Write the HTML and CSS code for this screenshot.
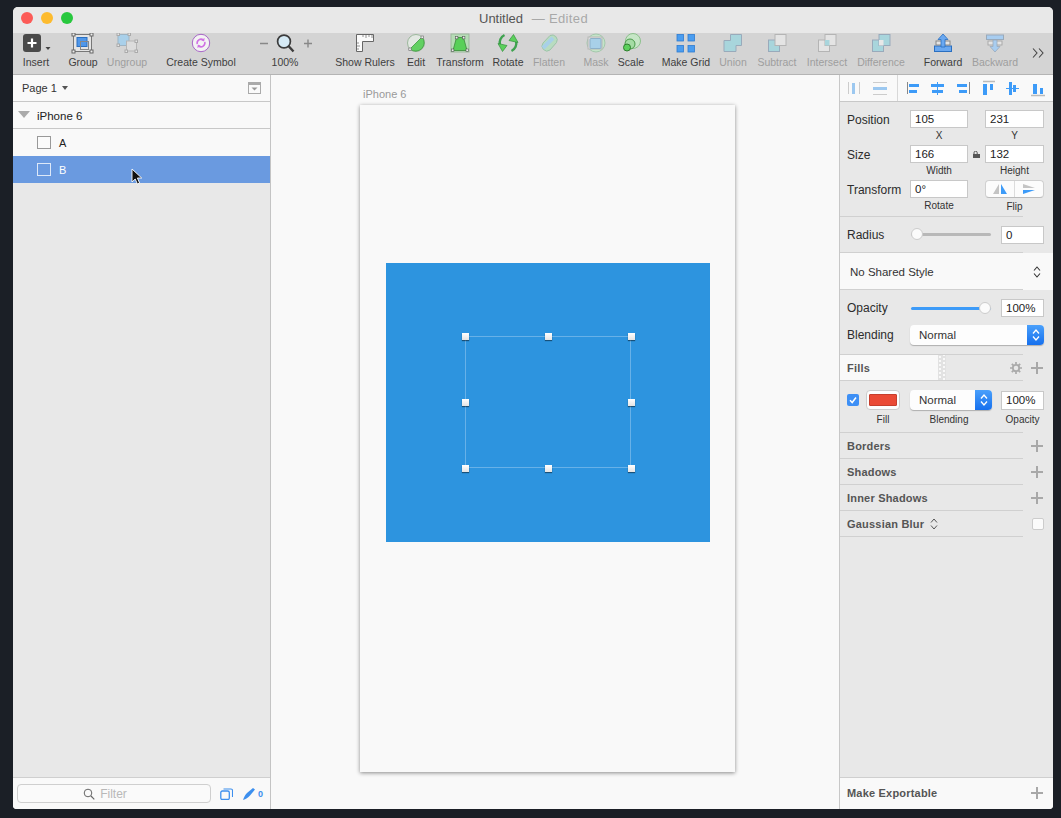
FILE: index.html
```html
<!DOCTYPE html>
<html lang="en">
<head>
  <meta charset="UTF-8" />
  <title>Untitled - Edited</title>
  <link rel="stylesheet" href="styles.css">
</head>
<body>

<div class="window">

  <!-- Title bar -->
  <div class="titlebar">
    <div class="lights">
      <span class="light red"></span>
      <span class="light yellow"></span>
      <span class="light green"></span>
    </div>
    <div class="title">Untitled <span class="edited">— Edited</span></div>
  </div>

  <!-- Toolbar -->
  <div class="toolbar">
    <div class="tool t-insert">
      <svg class="ico" viewBox="0 0 30 22"><rect x="2" y="1" width="18" height="18" rx="3" fill="#4a4a4a"/><path d="M11 5.500v9M6.500 10h9" stroke="#fff" stroke-width="2.200"/><path d="M24.500 14h5l-2.500 3z" fill="#444"/></svg>
      <span>Insert</span>
    </div>
    <div class="tool t-group">
      <svg class="ico" viewBox="0 0 30 22"><rect x="5.500" y="1.500" width="18" height="17" fill="#e4e4e4" stroke="#777"/><rect x="9" y="4.500" width="10" height="9" fill="#4f97ea" stroke="#2a6fc0"/><rect x="12.500" y="8.500" width="8" height="8" fill="none" stroke="#888"/><g fill="#eee" stroke="#666"><rect x="4" y="0" width="3" height="3"/><rect x="22" y="0" width="3" height="3"/><rect x="4" y="17" width="3" height="3"/><rect x="22" y="17" width="3" height="3"/></g></svg>
      <span>Group</span>
    </div>
    <div class="tool t-ungroup off">
      <svg class="ico" viewBox="0 0 30 22"><rect x="6" y="1.500" width="11" height="11" rx="1" fill="#a9d0ea" stroke="#9db4c4"/><rect x="14.500" y="8" width="10" height="10" fill="#dcdcdc" stroke="#b5b5b5"/><g fill="#e6e6e6" stroke="#aaa"><rect x="5" y="0" width="2.500" height="2.500"/><rect x="16" y="0" width="2.500" height="2.500"/><rect x="5" y="11" width="2.500" height="2.500"/><rect x="13" y="17" width="2.500" height="2.500"/><rect x="23" y="17" width="2.500" height="2.500"/><rect x="23" y="7" width="2.500" height="2.500"/></g></svg>
      <span>Ungroup</span>
    </div>
    <div class="tool t-symbol">
      <svg class="ico" viewBox="0 0 30 22"><circle cx="15" cy="10" r="8.700" fill="#f3f3f3" stroke="#a866c8" stroke-width="1"/><path d="M11.200 11a4 4 0 0 1 6-4.200M18.800 9a4 4 0 0 1-6 4.200" fill="none" stroke="#d070e4" stroke-width="1.600"/><path d="M18.600 5l-.4 3.400-3-1.200zM11.400 15l.4-3.400 3 1.200z" fill="#d070e4"/></svg>
      <span>Create Symbol</span>
    </div>
    <div class="tool t-zoom">
      <svg class="ico wide" viewBox="0 0 60 22"><path d="M5 10.500h8" stroke="#888" stroke-width="1.400"/><circle cx="29" cy="8.500" r="6.400" fill="#d6eaf5" stroke="#3c3c3c" stroke-width="1.700"/><path d="M33.500 13l5 5.500" stroke="#3c3c3c" stroke-width="2.400"/><path d="M49 10.500h8M53 6.500v8" stroke="#888" stroke-width="1.400"/></svg>
      <span>100%</span>
    </div>
    <div class="tool t-rulers">
      <svg class="ico" viewBox="0 0 30 22"><path d="M6.500 1.500h17v7h-11v10h-6z" fill="#fafafa" stroke="#666"/><path d="M13 2v2M16 2v3M19 2v2M22 2v3M7 10h2M7 13h3M7 16h2" stroke="#777" stroke-width=".8"/></svg>
      <span>Show Rulers</span>
    </div>
    <div class="tool t-edit">
      <svg class="ico" viewBox="0 0 30 22"><circle cx="15" cy="10" r="8.500" fill="#e2e8e2" stroke="#9cb89c"/><path d="M21 4a8.500 8.500 0 0 1-12 12z" fill="#62d062" stroke="#3f9a3f" stroke-width=".8"/><rect x="20" y="3" width="2.400" height="2.400" fill="#eee" stroke="#666" stroke-width=".6"/><rect x="7.800" y="15" width="2.400" height="2.400" fill="#eee" stroke="#666" stroke-width=".6"/></svg>
      <span>Edit</span>
    </div>
    <div class="tool t-transform">
      <svg class="ico" viewBox="0 0 30 22"><rect x="6" y="1" width="18" height="18" fill="#b6dcb6" stroke="#9cb89c"/><path d="M11.500 4.500h7l3.500 13h-14z" fill="#58d058" stroke="#3a8a3a" stroke-width=".8"/><g fill="#eee" stroke="#555" stroke-width=".6"><rect x="10.500" y="3.500" width="2.400" height="2.400"/><rect x="17.500" y="3.500" width="2.400" height="2.400"/><rect x="6.500" y="16" width="2.400" height="2.400"/><rect x="21" y="16" width="2.400" height="2.400"/></g></svg>
      <span>Transform</span>
    </div>
    <div class="tool t-rotate">
      <svg class="ico" viewBox="0 0 30 22"><g><path d="M11.500 2A8.500 8.500 0 0 0 7 12" fill="none" stroke="#3fa24f" stroke-width="2.400"/><path d="M5 10.500l9 2-4.500 6z" fill="#5cd05c" stroke="#35903f" stroke-width=".7"/></g><g transform="rotate(180 15 10)"><path d="M11.500 2A8.500 8.500 0 0 0 7 12" fill="none" stroke="#3fa24f" stroke-width="2.400"/><path d="M5 10.500l9 2-4.500 6z" fill="#5cd05c" stroke="#35903f" stroke-width=".7"/></g></svg>
      <span>Rotate</span>
    </div>
    <div class="tool t-flatten off">
      <svg class="ico" viewBox="0 0 30 22"><path d="M9 10l7-7.500a5 5 0 0 1 6.500 7L16 17a5 5 0 0 1-7-7z" fill="#b8dcc0" stroke="#9cc4a8"/><path d="M9 15l10-10" stroke="#a8d0e8" stroke-width="4"/></svg>
      <span>Flatten</span>
    </div>
    <div class="tool t-mask off">
      <svg class="ico" viewBox="0 0 30 22"><circle cx="15" cy="10" r="9" fill="#c4e4c8" stroke="#a4c8ac"/><rect x="7" y="4" width="14" height="12" fill="#dcdcdc" stroke="#b8b8b8"/><rect x="9" y="5.500" width="11" height="10" rx="1" fill="#a8d0e8" stroke="#8cb0c8"/></svg>
      <span>Mask</span>
    </div>
    <div class="tool t-scale">
      <svg class="ico" viewBox="0 0 30 22"><circle cx="17" cy="8" r="7.500" fill="#c6e6c6" stroke="#8cc08c"/><circle cx="14" cy="11" r="5" fill="#a4dca4" stroke="#4a9a4a"/><circle cx="11" cy="14.500" r="3.500" fill="#5cd05c" stroke="#2f7f2f"/></svg>
      <span>Scale</span>
    </div>
    <div class="tool t-grid">
      <svg class="ico" viewBox="0 0 30 22"><g fill="#4a9df0" stroke="#2f7cd0" stroke-width=".8"><rect x="6" y="1.500" width="6.500" height="6.500"/><rect x="17" y="1.500" width="6.500" height="6.500"/><rect x="6" y="12.500" width="6.500" height="6.500"/><rect x="17" y="12.500" width="6.500" height="6.500"/></g></svg>
      <span>Make Grid</span>
    </div>
    <div class="tool t-union off">
      <svg class="ico" viewBox="0 0 30 22"><path d="M12.500 1.500h11v11h-5.500v6h-12v-11h6.500z" fill="#a8d5dc" stroke="#9ab"/></svg>
      <span>Union</span>
    </div>
    <div class="tool t-subtract off">
      <svg class="ico" viewBox="0 0 30 22"><rect x="6.500" y="7" width="11" height="11.500" fill="#a8d5dc" stroke="#9ab"/><rect x="13" y="1.500" width="11" height="11" fill="#e4e4e4" stroke="#b4b4b4"/></svg>
      <span>Subtract</span>
    </div>
    <div class="tool t-intersect off">
      <svg class="ico" viewBox="0 0 30 22"><rect x="6.500" y="7" width="11" height="11.500" fill="#e4e4e4" stroke="#b4b4b4"/><rect x="13" y="1.500" width="11" height="11" fill="#e4e4e4" stroke="#b4b4b4"/><rect x="13" y="7" width="4.500" height="5.500" fill="#a8d5dc"/></svg>
      <span>Intersect</span>
    </div>
    <div class="tool t-difference off">
      <svg class="ico" viewBox="0 0 30 22"><rect x="6.500" y="7" width="11" height="11.500" fill="#a8d5dc" stroke="#9ab"/><rect x="13" y="1.500" width="11" height="11" fill="#a8d5dc" stroke="#9ab"/><rect x="13" y="7" width="4.500" height="5.500" fill="#e8e8e8"/></svg>
      <span>Difference</span>
    </div>
    <div class="tool t-forward">
      <svg class="ico" viewBox="0 0 30 22"><rect x="6.500" y="13" width="17" height="5.500" fill="#6aa8f0" stroke="#2a6fc0"/><rect x="8" y="8" width="14" height="4" fill="#e4e4e4" stroke="#888"/><path d="M15 1l5 5.500h-3V14h-4V6.500h-3z" fill="#6aa8f0" stroke="#2a6fc0" stroke-width=".8"/></svg>
      <span>Forward</span>
    </div>
    <div class="tool t-backward off">
      <svg class="ico" viewBox="0 0 30 22"><rect x="6.500" y="2" width="17" height="4.500" fill="#a8cdf0" stroke="#9ab"/><rect x="8" y="8" width="14" height="4" fill="#e4e4e4" stroke="#aaa"/><path d="M15 19l-5-5.500h3V7h4v6.500h3z" fill="#a8cdf0" stroke="#9ab" stroke-width=".8"/></svg>
      <span>Backward</span>
    </div>
    <div class="tool t-more">
      <svg class="more-ico" viewBox="0 0 12 10"><path d="M1 .5l4 4.500-4 4.500M7 .5l4 4.500-4 4.500" fill="none" stroke="#444" stroke-width="1.100"/></svg>
    </div>
  </div>

  <div class="main">

    <!-- Layer list -->
    <div class="layers">
      <div class="page-row">
        <span class="page-name">Page 1</span>
        <span class="caret"></span>
        <svg class="page-toggle" viewBox="0 0 13 12"><rect x=".5" y=".5" width="12" height="11" fill="#fafafa" stroke="#aaa"/><rect x="1" y="1" width="11" height="2" fill="#aaa"/><path d="M3.500 5.500h6l-3 3z" fill="#999"/></svg>
      </div>
      <div class="layer artboard-row">
        <span class="disclosure"></span>
        <span>iPhone 6</span>
      </div>
      <div class="layer shape-row">
        <span class="shape-box"></span>
        <span>A</span>
      </div>
      <div class="layer shape-row selected">
        <span class="shape-box"></span>
        <span>B</span>
      </div>
      <div class="layers-space"></div>
      <div class="layers-foot">
        <div class="filter">
          <svg class="filter-ico" viewBox="0 0 12 12"><circle cx="5" cy="5" r="3.800" fill="none" stroke="#666" stroke-width="1"/><path d="M8 8l3.300 3.300" stroke="#666" stroke-width="1.200"/></svg>
          <span>Filter</span>
        </div>
        <svg class="foot-ico" viewBox="0 0 13 12"><rect x=".8" y="3" width="8.500" height="8.500" rx="1.500" fill="none" stroke="#3d8fee" stroke-width="1.300"/><path d="M3.500 1h7.500a1.500 1.500 0 0 1 1.500 1.500V9" fill="none" stroke="#3d8fee" stroke-width="1.100"/></svg>
        <svg class="foot-ico pen" viewBox="0 0 13 12"><path d="M0 12c1-3 2-5 4-7l6-5 2 1.500-5 6c-2 2-4 3.500-7 4.500z" fill="#3d8fee"/></svg>
        <span class="pen-count">0</span>
      </div>
    </div>

    <!-- Canvas -->
    <div class="canvas">
      <div class="artboard-name">iPhone 6</div>
      <div class="artboard">
        <div class="rect-a">
          <div class="selection">
            <span class="handle h-tl"></span>
            <span class="handle h-tc"></span>
            <span class="handle h-tr"></span>
            <span class="handle h-ml"></span>
            <span class="handle h-mr"></span>
            <span class="handle h-bl"></span>
            <span class="handle h-bc"></span>
            <span class="handle h-br"></span>
          </div>
        </div>
      </div>
    </div>

    <!-- Inspector -->
    <div class="inspector">
      <div class="align-row">
        <svg class="align-ico" viewBox="0 0 200 14">
          <g fill="none" stroke="#ccc"><path d="M1.500 1v12M12.500 1v12M26 1.500h14M26 13.500h14"/></g>
          <rect x="5" y="2" width="3" height="11" fill="#9cc8f0"/><rect x="26" y="6" width="14" height="3" fill="#9cc8f0"/>
          <path d="M50.500 -6v26" stroke="#d8d8d8"/>
          <g fill="#3d9bf8">
            <rect x="60" y="1" width="1" height="12" fill="#888"/><rect x="62" y="3" width="10" height="3"/><rect x="62" y="9" width="8" height="3"/>
            <rect x="84" y="3" width="13" height="3"/><rect x="85" y="9" width="11" height="3"/><rect x="90" y="1" width="1" height="13"/>
            <rect x="122" y="1" width="1" height="12" fill="#888"/><rect x="110" y="3" width="10" height="3"/><rect x="112" y="9" width="8" height="3"/>
            <rect x="136" y="3" width="4" height="11"/><rect x="143" y="3" width="3" height="6"/>
            <rect x="162" y="1" width="3" height="13"/><rect x="166" y="4" width="3" height="7"/><rect x="159" y="7" width="13" height="1"/>
            <rect x="186" y="3" width="4" height="10"/><rect x="193" y="7" width="3" height="6"/>
          </g>
          <path d="M136 .5h12M184 14.500h14" stroke="#bbb" stroke-width="1.500"/>
        </svg>
      </div>

      <div class="geometry sep">
        <div class="geo-row">
          <span class="lbl">Position</span>
          <div class="field"><div class="box">105</div><span class="cap">X</span></div>
          <span></span>
          <div class="field"><div class="box">231</div><span class="cap">Y</span></div>
        </div>
        <div class="geo-row">
          <span class="lbl">Size</span>
          <div class="field"><div class="box">166</div><span class="cap">Width</span></div>
          <svg class="lock" viewBox="0 0 7 7"><path d="M1 3V1.800a1.600 1.600 0 0 1 3.200 0V3" fill="none" stroke="#555"/><rect x="0" y="3" width="7" height="4" fill="#555"/></svg>
          <div class="field"><div class="box">132</div><span class="cap">Height</span></div>
        </div>
        <div class="geo-row">
          <span class="lbl">Transform</span>
          <div class="field"><div class="box">0°</div><span class="cap">Rotate</span></div>
          <span></span>
          <div class="field">
            <div class="flip">
              <svg viewBox="0 0 14 10"><path d="M6 0v10H0z" fill="#c4c4c4"/><path d="M8 0v10h6z" fill="#3d9bf8"/></svg>
              <span class="flip-sep"></span>
              <svg viewBox="0 0 14 10"><path d="M1 0l12 4H1z" fill="#c4c4c4"/><path d="M1 6h12L1 10z" fill="#3d9bf8"/></svg>
            </div>
            <span class="cap flip-cap">Flip</span>
          </div>
        </div>
      </div>

      <div class="slider-row radius sep">
        <span class="lbl">Radius</span>
        <div class="slider"><span class="knob knob-left"></span></div>
        <div class="box num">0</div>
      </div>

      <div class="shared sep">
        <span>No Shared Style</span>
        <svg class="updown" viewBox="0 0 8 12"><path d="M1 4.500l3-3.500 3 3.500M1 7.500l3 3.500 3-3.500" fill="none" stroke="#333" stroke-width="1.100"/></svg>
      </div>

      <div class="opacity-block sep">
        <div class="slider-row">
          <span class="lbl">Opacity</span>
          <div class="slider blue"><span class="knob knob-right"></span></div>
          <div class="box num">100%</div>
        </div>
        <div class="blend-row">
          <span class="lbl">Blending</span>
          <div class="select blend-wide">
            <span>Normal</span>
            <span class="stepper"><svg viewBox="0 0 8 12"><path d="M1 4.500l3-3.500 3 3.500M1 7.500l3 3.500 3-3.500" fill="none" stroke="#fff" stroke-width="1.300"/></svg></span>
          </div>
        </div>
      </div>

      <div class="sec-head sep fills-head">
        <span class="sec-title">Fills</span>
        <svg class="gear" viewBox="0 0 12 12"><circle cx="6" cy="6" r="3.200" fill="none" stroke="#aaa" stroke-width="1.800"/><path d="M6 0v2.500M6 9.500V12M0 6h2.500M9.500 6H12M1.800 1.800l1.800 1.800M8.400 8.400l1.800 1.800M1.800 10.200l1.800-1.800M8.400 3.600l1.800-1.800" stroke="#aaa" stroke-width="1.700"/></svg>
        <span class="plus"></span>
      </div>

      <div class="fill-row sep">
        <div class="fill-top">
          <span class="check"><svg viewBox="0 0 10 10"><path d="M2 5.200l2.200 2.300L8 2.500" fill="none" stroke="#fff" stroke-width="1.500"/></svg></span>
          <span class="swatch"><span class="swatch-color"></span></span>
          <div class="select blend-small">
            <span>Normal</span>
            <span class="stepper"><svg viewBox="0 0 8 12"><path d="M1 4.500l3-3.500 3 3.500M1 7.500l3 3.500 3-3.500" fill="none" stroke="#fff" stroke-width="1.300"/></svg></span>
          </div>
          <div class="box num">100%</div>
        </div>
        <div class="fill-caps">
          <span class="cap c-fill">Fill</span>
          <span class="cap c-blend">Blending</span>
          <span class="cap c-op">Opacity</span>
        </div>
      </div>

      <div class="sec-head sep"><span class="sec-title">Borders</span><span class="plus"></span></div>
      <div class="sec-head sep"><span class="sec-title">Shadows</span><span class="plus"></span></div>
      <div class="sec-head sep"><span class="sec-title">Inner Shadows</span><span class="plus"></span></div>
      <div class="sec-head sep">
        <span class="sec-title">Gaussian Blur</span>
        <svg class="updown blur-arrows" viewBox="0 0 8 12"><path d="M1 4.500l3-3.500 3 3.500M1 7.500l3 3.500 3-3.500" fill="none" stroke="#555" stroke-width="1"/></svg>
        <span class="blur-check"></span>
      </div>

      <div class="inspector-space"></div>
      <div class="export">
        <span class="sec-title">Make Exportable</span>
        <span class="plus"></span>
      </div>
    </div>
  </div>

  <!-- Mouse pointer -->
  <svg class="pointer" viewBox="0 0 12 18"><path d="M1 1v13l3.200-3 2.200 5 2.200-1-2.200-5h4.300z" fill="#111" stroke="#fff" stroke-width=".9"/></svg>
</div>

</body>
</html>
```

FILE: styles.css
```css
* {
  box-sizing: border-box;
}
html, body {
  height: 100%;
}
body {
  margin: 0;
  padding: 7px 8px 9px 13px;
  background: #1b1f26;
  font-family: "Liberation Sans", Arial, sans-serif;
  color: #333;
  overflow: hidden;
}
.window {
  position: relative;
  height: 802px;
  display: flex;
  flex-direction: column;
  border-radius: 5px 5px 4px 4px;
  overflow: hidden;
  background: #e8e8e8;
}

/* title bar */
.titlebar {
  height: 26px;
  position: relative;
  background: #e8e8e8;
}
.lights {
  display: flex;
  gap: 8px;
  padding: 5px 0 0 8px;
}
.light {
  width: 12px;
  height: 12px;
  border-radius: 50%;
}
.red { background: #fc5b57; }
.yellow { background: #fdbb2e; }
.green { background: #28c83e; }
.title {
  position: absolute;
  left: 466px;
  top: 3px;
  font-size: 13px;
  line-height: 17px;
  color: #555;
}
.edited {
  margin-left: 5px;
  letter-spacing: 0.35px;
  color: #a8a8a8;
}

/* toolbar */
.toolbar {
  height: 42px;
  display: flex;
  background: #d4d4d4;
  border-bottom: 1px solid #b4b4b4;
}
.tool {
  display: flex;
  flex-direction: column;
  align-items: center;
  flex: none;
  font-size: 10.5px;
  line-height: 14px;
  color: #3e3e3e;
  white-space: nowrap;
}
.tool.off {
  color: #9e9e9e;
}
.ico {
  width: 30px;
  height: 22px;
  flex: none;
}
.ico.wide {
  width: 60px;
}
.t-insert { width: 46px; }
.t-group { width: 48px; }
.t-ungroup { width: 40px; }
.t-symbol { width: 108px; }
.t-zoom { width: 60px; }
.t-rulers { width: 60px; margin-left: 20px; }
.t-edit { width: 42px; }
.t-transform { width: 46px; }
.t-rotate { width: 50px; }
.t-flatten { width: 32px; }
.t-mask { width: 30px; margin-left: 16px; }
.t-scale { width: 40px; }
.t-grid { width: 70px; }
.t-union { width: 24px; }
.t-subtract { width: 64px; }
.t-intersect { width: 36px; }
.t-difference { width: 72px; }
.t-forward { width: 52px; }
.t-backward { width: 52px; }
.t-more { width: 34px; }
.more-ico {
  width: 12px;
  height: 10px;
  margin-top: 15px;
}

/* three main columns */
.main {
  flex: 1;
  display: flex;
  min-height: 0;
}

/* layer list */
.layers {
  width: 258px;
  display: flex;
  flex-direction: column;
  background: #e8e8e8;
  border-right: 1px solid #c4c4c4;
}
.page-row {
  height: 27px;
  display: flex;
  align-items: center;
  padding: 0 9px;
  background: #f9f9f9;
  border-bottom: 1px solid #c8c8c8;
  font-size: 11px;
}
.page-name {
  color: #333;
}
.caret {
  width: 0;
  height: 0;
  margin-left: 5px;
  border-left: 3px solid transparent;
  border-right: 3px solid transparent;
  border-top: 4px solid #555;
}
.page-toggle {
  width: 13px;
  height: 12px;
  margin-left: auto;
}
.layer {
  height: 27px;
  display: flex;
  align-items: center;
  font-size: 11px;
  background: #f9f9f9;
  color: #222;
}
.artboard-row {
  padding-top: 1px;
  font-size: 11.5px;
  border-bottom: 1px solid #c8c8c8;
}
.disclosure {
  width: 0;
  height: 0;
  margin: -3px 7px 0 5px;
  border-left: 6px solid transparent;
  border-right: 6px solid transparent;
  border-top: 7px solid #aaa;
}
.shape-row {
  gap: 8px;
  padding-left: 24px;
}
.shape-box {
  width: 14px;
  height: 13px;
  border: 1px solid #999;
  background: #fbfbfb;
}
.selected {
  background: #6a9ae0;
  color: #fff;
}
.selected .shape-box {
  background: #6a9ae0;
  border-color: #dde8f8;
}
.layers-space {
  flex: 1;
}
.layers-foot {
  height: 32px;
  display: flex;
  align-items: center;
  padding-left: 4px;
  background: #f9f9f9;
  border-top: 1px solid #cfcfcf;
}
.filter {
  width: 194px;
  height: 19px;
  display: flex;
  align-items: center;
  justify-content: center;
  gap: 5px;
  padding-right: 18px;
  border: 1px solid #cfcfcf;
  border-radius: 4px;
  font-size: 12px;
  color: #b8b8b8;
  background: #fafafa;
}
.filter-ico {
  width: 12px;
  height: 12px;
}
.foot-ico {
  width: 13px;
  height: 12px;
  margin-left: 9px;
}
.foot-ico.pen {
  margin-left: 10px;
}
.pen-count {
  margin-left: 2px;
  font-size: 9px;
  font-weight: bold;
  color: #3d8fee;
}

/* canvas */
.canvas {
  width: 569px;
  padding-left: 89px;
  background: #f9f9f9;
  border-right: 1px solid #c8c8c8;
}
.artboard-name {
  height: 30px;
  padding: 12px 0 0 3px;
  font-size: 11px;
  line-height: 14px;
  color: #999;
}
.artboard {
  width: 375px;
  height: 667px;
  padding: 158px 0 0 26px;
  background: #f9f9f9;
  box-shadow: 0 1px 4px rgba(0, 0, 0, 0.45);
}
.rect-a {
  position: relative;
  width: 324px;
  height: 279px;
  background: #2d94df;
}
.selection {
  position: absolute;
  left: 79px;
  top: 73px;
  width: 166px;
  height: 132px;
  border: 1px solid rgba(255, 255, 255, 0.28);
}
.handle {
  position: absolute;
  width: 7px;
  height: 7px;
  background: linear-gradient(#fff, #e4e4e4);
  box-shadow: 0 1px 1px rgba(0, 0, 0, 0.45);
}
.h-tl { left: -4px; top: -4px; }
.h-tc { left: 79px; top: -4px; }
.h-tr { left: 162px; top: -4px; }
.h-ml { left: -4px; top: 62px; }
.h-mr { left: 162px; top: 62px; }
.h-bl { left: -4px; top: 128px; }
.h-bc { left: 79px; top: 128px; }
.h-br { left: 162px; top: 128px; }

/* inspector */
.inspector {
  flex: 1;
  display: flex;
  flex-direction: column;
  background: #e8e8e8;
  font-size: 11px;
  min-width: 0;
}
.sep {
  border-bottom: 1px solid transparent;
  border-image: linear-gradient(90deg, #d0d0d0 183px, transparent 183px) 0 0 1 0;
}
.align-row {
  height: 27px;
  padding: 6px 0 0 7px;
  background: #f9f9f9;
  border-bottom: 1px solid #c8c8c8;
}
.align-ico {
  display: block;
  width: 200px;
  height: 14px;
  overflow: visible;
}
.geometry {
  height: 115px;
  padding: 8px 0 0 7px;
}
.geo-row {
  display: grid;
  grid-template-columns: 63px 58px 17px 59px;
  height: 35px;
}
.lbl {
  padding-top: 1px;
  font-size: 12px;
  line-height: 18px;
  color: #2c2c2c;
}
.field {
  display: flex;
  flex-direction: column;
  align-items: center;
}
.box {
  width: 100%;
  height: 18px;
  padding-left: 4px;
  border: 1px solid #c8c8c8;
  background: #fff;
  font-size: 11.5px;
  line-height: 16px;
  color: #222;
}
.cap {
  font-size: 10px;
  line-height: 15px;
  color: #333;
  white-space: nowrap;
}
.lock {
  width: 7px;
  height: 7px;
  margin: 6px 0 0 5px;
}
.flip {
  width: 100%;
  height: 18px;
  display: flex;
  align-items: center;
  justify-content: space-around;
  padding: 0 3px;
  border: 1px solid #d0d0d0;
  border-bottom-color: #bbb;
  border-radius: 4px;
  background: #fcfcfc;
}
.flip svg {
  width: 14px;
  height: 10px;
}
.flip-sep {
  width: 1px;
  height: 100%;
  background: #dcdcdc;
}
.flip-cap {
  margin-top: 1px;
}
.slider-row {
  display: grid;
  grid-template-columns: 64px 80px 10px 43px;
  align-items: center;
  padding-left: 7px;
}
.slider-row .lbl {
  padding-top: 0;
}
.slider-row .box {
  grid-column: 4;
  width: 43px;
}
.radius {
  height: 36px;
}
.slider {
  position: relative;
  height: 3px;
  border-radius: 2px;
  background: #b8b8b8;
}
.slider.blue {
  background: #3d9bf8;
}
.knob {
  position: absolute;
  top: -5px;
  width: 12px;
  height: 12px;
  border-radius: 50%;
  background: #fbfbfb;
  border: 1px solid #ccc;
}
.knob-left { left: 0; }
.knob-right { right: 0; }
.shared {
  height: 37px;
  display: flex;
  align-items: center;
  justify-content: space-between;
  padding: 1px 12px 0 10px;
  background: #f9f9f9;
  font-size: 11.5px;
  color: #333;
}
.updown {
  width: 8px;
  height: 12px;
}
.opacity-block {
  height: 65px;
  padding-top: 9px;
}
.blend-row {
  display: flex;
  align-items: center;
  margin-top: 8px;
  padding-left: 7px;
}
.blend-row .lbl {
  width: 63px;
  padding-top: 0;
}
.select {
  height: 20px;
  display: flex;
  align-items: center;
  justify-content: space-between;
  padding-left: 9px;
  border-radius: 4px;
  background: #fdfdfd;
  box-shadow: 0 1px 1px rgba(0, 0, 0, 0.25);
  font-size: 11.5px;
  color: #333;
  overflow: hidden;
}
.blend-wide { width: 134px; }
.blend-small { width: 82px; }
.stepper {
  width: 17px;
  height: 100%;
  display: flex;
  align-items: center;
  justify-content: center;
  background: linear-gradient(#4aa0fb, #1670ee);
}
.stepper svg {
  width: 8px;
  height: 12px;
}
.sec-head {
  height: 26px;
  flex: none;
  display: flex;
  align-items: center;
  padding: 0 10px 0 7px;
}
.sec-title {
  font-size: 11px;
  font-weight: bold;
  color: #555;
  letter-spacing: 0.2px;
}
.fills-head {
  background:
    radial-gradient(circle, #f9f9f9 1px, #e2e2e2 1.5px) 98px 0 / 4px 4px repeat-y,
    radial-gradient(circle, #f9f9f9 1px, #e2e2e2 1.5px) 102px 2px / 4px 4px repeat-y,
    linear-gradient(90deg, #f9f9f9 98px, #e8e8e8 98px);
}
.gear {
  width: 12px;
  height: 12px;
  margin-left: auto;
  margin-right: 9px;
}
.plus {
  width: 12px;
  height: 12px;
  margin-left: auto;
  background:
    linear-gradient(#a8a8a8, #a8a8a8) center / 12px 2px no-repeat,
    linear-gradient(#a8a8a8, #a8a8a8) center / 2px 12px no-repeat;
}
.gear + .plus {
  margin-left: 0;
}
.fill-row {
  height: 52px;
  padding-top: 9px;
}
.fill-top {
  display: flex;
  align-items: center;
  padding-left: 7px;
}
.fill-top .box {
  width: 43px;
  height: 19px;
  margin-left: 9px;
}
.check {
  width: 12px;
  height: 12px;
  display: flex;
  align-items: center;
  justify-content: center;
  border-radius: 2px;
  background: #3d8ff5;
}
.check svg {
  width: 10px;
  height: 10px;
}
.swatch {
  width: 34px;
  height: 20px;
  margin: 0 10px 0 7px;
  padding: 3px 2px;
  border: 1px solid #ccc;
  border-radius: 4px;
  background: #fdfdfd;
}
.swatch-color {
  display: block;
  height: 100%;
  background: #ea4a35;
  border: 1px solid #c63e2c;
  border-radius: 1px;
}
.fill-caps {
  display: flex;
  padding-top: 2px;
}
.c-fill {
  width: 34px;
  margin-left: 26px;
  text-align: center;
}
.c-blend {
  width: 82px;
  margin-left: 8px;
  text-align: center;
}
.c-op {
  width: 43px;
  margin-left: 11px;
  text-align: center;
}
.blur-arrows {
  margin-left: 6px;
}
.blur-check {
  width: 12px;
  height: 12px;
  margin: 0 -1px 0 auto;
  border: 1px solid #ccc;
  border-radius: 2px;
  background: #fbfbfb;
}
.inspector-space {
  flex: 1;
}
.export {
  height: 32px;
  display: flex;
  align-items: center;
  padding: 0 10px 1px 7px;
  background: #f9f9f9;
  border-top: 1px solid #cfcfcf;
}

/* mouse pointer sits over everything */
.pointer {
  position: absolute;
  left: 118px;
  top: 161px;
  width: 12px;
  height: 18px;
}
```
